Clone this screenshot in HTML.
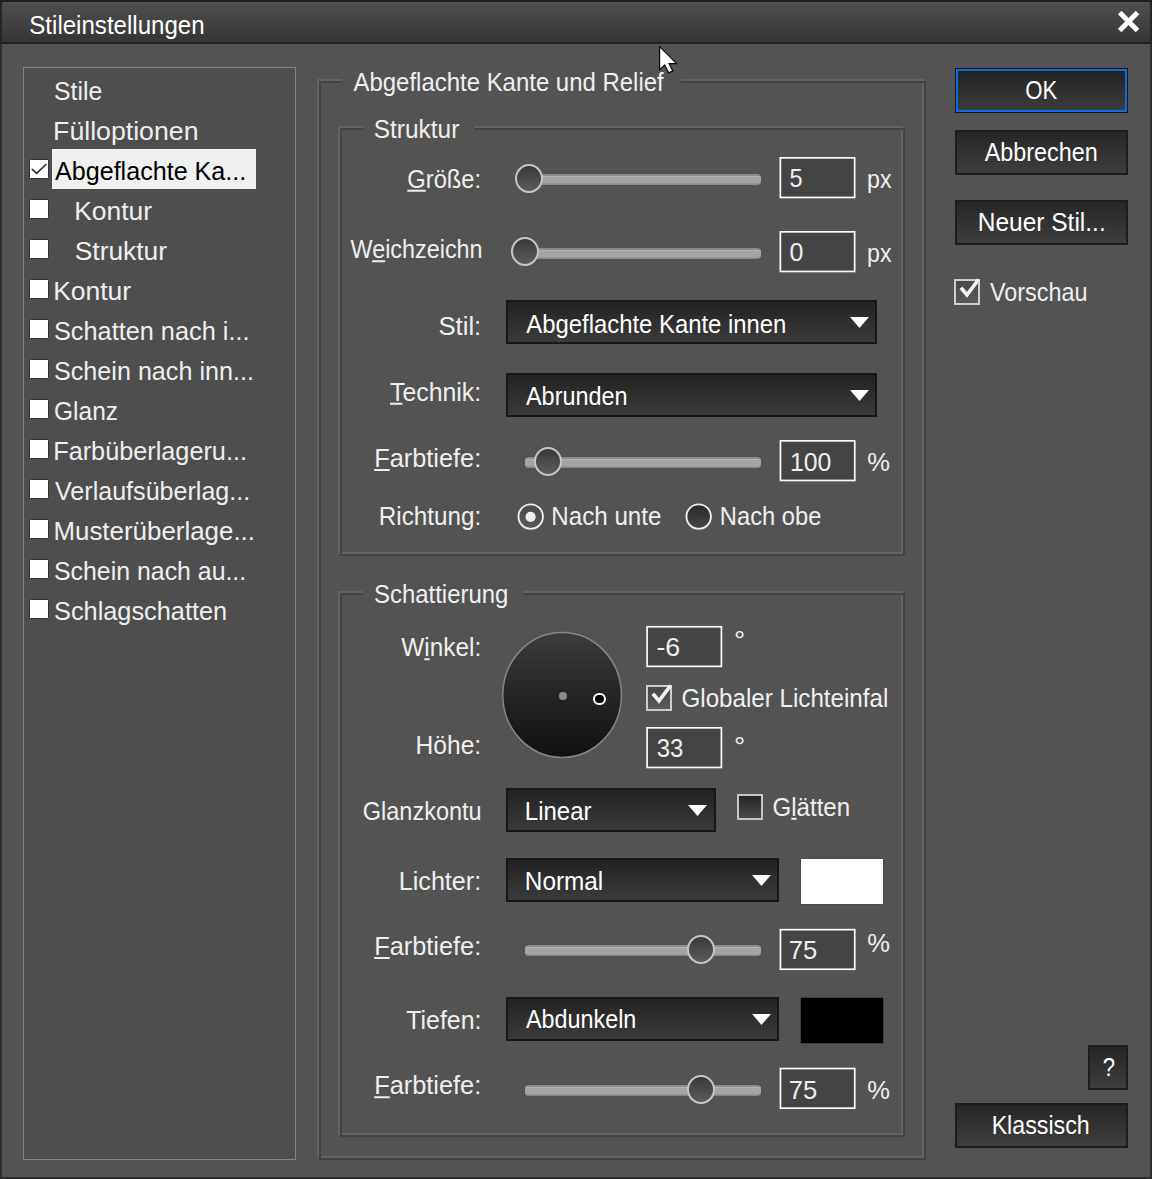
<!DOCTYPE html>
<html lang="de"><head><meta charset="utf-8"><title>Stileinstellungen</title>
<style>
html,body{margin:0;padding:0}
body{width:1152px;height:1179px;position:relative;overflow:hidden;background:#535353;font-family:"Liberation Sans", sans-serif;font-size:25.0px}
.a{position:absolute;box-sizing:border-box}
.t{position:absolute;left:0;top:0;white-space:nowrap;line-height:1;transform-origin:0 0;font-size:25.0px}
.t u{text-decoration-thickness:1.6px;text-underline-offset:2px}
.btn{border:2px solid #1d1d1d;background:linear-gradient(#262626,#3e3e3e)}
.dd{border:2px solid #171717;background:linear-gradient(#222222,#3b3b3b)}
.inp{border:2px solid #ececec;background:#444444}
.cb{width:20px;height:20px;left:29px;border:1px solid #303030;background:#fff;border-radius:1.5px}
.gl{border:2px solid #636363}
.gd{border:2px solid #434343}
.gap{background:#535353}
.trk{height:11px;border-radius:4px;background:linear-gradient(#8c8c8c 0,#8c8c8c 1.5px,#b4b4b4 2px,#b0b0b0 3px,#a4a4a4 3.5px,#a4a4a4 8.5px,#8e8e8e 10px,#858585 11px)}
.th{width:28px;height:29px;border-radius:50%;border:2px solid #c6c6c6;background:linear-gradient(#393939,#5c5c5c)}
.rad{width:26px;height:26px;border-radius:50%;border:2px solid #dcdcdc;background:linear-gradient(#353535,#5a5a5a)}
.cbx{width:26px;height:26px;border:2px solid #c6c6c6;background:linear-gradient(#252525,#4a4a4a)}
.cbx.on{border-color:#cdcdcd;background:linear-gradient(#474747,#595959)}
</style></head>
<body>
<div class="a " style="left:0px;top:0px;width:1152px;height:1179px;background:#2e2e2e"></div>
<div class="a " style="left:0px;top:0px;width:1152px;height:44px;background:#252525"></div>
<div class="a " style="left:0px;top:0px;width:1152px;height:2px;background:#1f1f1f"></div>
<div class="a " style="left:2px;top:44px;width:1148px;height:1133px;background:#535353"></div>
<div class="a " style="left:2px;top:2px;width:1148px;height:40px;background:linear-gradient(#4f4f4f,#353535)"></div>
<div class="a " style="left:2px;top:42px;width:1148px;height:2px;background:#212121"></div>
<svg class="a" style="left:1110px;top:4px" width="36" height="36" viewBox="1110 4 36 36"><path d="M1119.7 12.6 L1137.5 30.6 M1137.5 12.6 L1119.7 30.6" stroke="#fff" stroke-width="5" fill="none"/></svg>
<div class="a " style="left:23px;top:67px;width:273px;height:1093px;border:1px solid #7e8691;background:#4e4e4e"></div>
<div class="a " style="left:52px;top:149px;width:204px;height:40px;background:#f0f0f0"></div>
<div class="a cb" style="top:159px"></div>
<div class="a cb" style="top:199px"></div>
<div class="a cb" style="top:239px"></div>
<div class="a cb" style="top:279px"></div>
<div class="a cb" style="top:319px"></div>
<div class="a cb" style="top:359px"></div>
<div class="a cb" style="top:399px"></div>
<div class="a cb" style="top:439px"></div>
<div class="a cb" style="top:479px"></div>
<div class="a cb" style="top:519px"></div>
<div class="a cb" style="top:559px"></div>
<div class="a cb" style="top:599px"></div>
<svg class="a" style="left:29px;top:159px" width="20" height="20" viewBox="29 159 20 20"><path d="M32.3 169.4 L36.7 173.4 L45.8 164.5" stroke="#333" stroke-width="1.7" fill="none" stroke-linecap="round" stroke-linejoin="round"/></svg>
<div class="a gl" style="left:317px;top:79px;width:607px;height:1079px;"></div><div class="a gd" style="left:319px;top:81px;width:607px;height:1079px;"></div><div class="a gap" style="left:342px;top:79px;width:338.5px;height:4px;"></div>
<div class="a gl" style="left:338px;top:126px;width:565px;height:428px;"></div><div class="a gd" style="left:340px;top:128px;width:565px;height:428px;"></div><div class="a gap" style="left:363px;top:126px;width:111px;height:4px;"></div>
<div class="a gl" style="left:338px;top:591px;width:565px;height:544px;"></div><div class="a gd" style="left:340px;top:593px;width:565px;height:544px;"></div><div class="a gap" style="left:363px;top:591px;width:160px;height:4px;"></div>
<div class="a trk" style="left:525px;top:174px;width:236px;height:11px;"></div>
<div class="a th" style="left:515px;top:164px;width:28px;height:29px;"></div>
<div class="a trk" style="left:525px;top:248px;width:236px;height:11px;"></div>
<div class="a th" style="left:511px;top:237px;width:28px;height:29px;"></div>
<div class="a trk" style="left:525px;top:457px;width:236px;height:11px;"></div>
<div class="a th" style="left:534px;top:447px;width:28px;height:29px;"></div>
<div class="a trk" style="left:525px;top:945px;width:236px;height:11px;"></div>
<div class="a th" style="left:687px;top:935px;width:28px;height:29px;"></div>
<div class="a trk" style="left:525px;top:1085px;width:236px;height:11px;"></div>
<div class="a th" style="left:687px;top:1075px;width:28px;height:29px;"></div>
<svg class="a" style="left:0;top:0" width="1152" height="1179" viewBox="0 0 1152 1179"><g fill="#444444" stroke="#fbfbfb" stroke-width="1.7"><rect x="780.35" y="157.85" width="74.3" height="39.6"/><rect x="780.35" y="231.85" width="74.3" height="39.6"/><rect x="780.45" y="440.85" width="74.3" height="39.6"/><rect x="647.10" y="626.75" width="74.3" height="39.6"/><rect x="647.10" y="727.85" width="74.3" height="39.6"/><rect x="780.45" y="929.65" width="74.3" height="39.6"/><rect x="780.45" y="1068.55" width="74.3" height="39.6"/></g></svg>
<div class="a dd" style="left:506px;top:300px;width:371px;height:44px;"></div>
<svg class="a" style="left:849.5px;top:316.7px" width="19" height="11" viewBox="0 0 19 11"><path d="M0 0 H19 L9.5 10.9 Z" fill="#fff"/></svg>
<div class="a dd" style="left:506px;top:373px;width:371px;height:44px;"></div>
<svg class="a" style="left:849.5px;top:389.7px" width="19" height="11" viewBox="0 0 19 11"><path d="M0 0 H19 L9.5 10.9 Z" fill="#fff"/></svg>
<div class="a dd" style="left:506px;top:788px;width:209.5px;height:44px;"></div>
<svg class="a" style="left:688.0px;top:804.7px" width="19" height="11" viewBox="0 0 19 11"><path d="M0 0 H19 L9.5 10.9 Z" fill="#fff"/></svg>
<div class="a dd" style="left:506px;top:858px;width:273px;height:44px;"></div>
<svg class="a" style="left:751.5px;top:874.7px" width="19" height="11" viewBox="0 0 19 11"><path d="M0 0 H19 L9.5 10.9 Z" fill="#fff"/></svg>
<div class="a dd" style="left:506px;top:997px;width:273px;height:44px;"></div>
<svg class="a" style="left:751.5px;top:1013.7px" width="19" height="11" viewBox="0 0 19 11"><path d="M0 0 H19 L9.5 10.9 Z" fill="#fff"/></svg>
<div class="a " style="left:800px;top:858px;width:84px;height:47px;background:#fff;border:1px solid #4c4c4c"></div>
<div class="a " style="left:800px;top:997px;width:84px;height:47px;background:#000;border:1px solid #3f3f3f"></div>
<svg class="a" style="left:510px;top:496px" width="210" height="42" viewBox="510 496 210 42"><defs><linearGradient id="rs" x1="0" y1="0" x2="0" y2="1"><stop offset="0" stop-color="#4a4a4a"/><stop offset="1" stop-color="#585858"/></linearGradient><linearGradient id="ru" x1="0" y1="0" x2="0" y2="1"><stop offset="0" stop-color="#282828"/><stop offset="1" stop-color="#484848"/></linearGradient></defs><circle cx="530.7" cy="516.6" r="12.25" fill="url(#rs)" stroke="#ececec" stroke-width="1.9"/><circle cx="530.6" cy="516.9" r="5.1" fill="#efefef"/><circle cx="698.7" cy="516.6" r="12.25" fill="url(#ru)" stroke="#ececec" stroke-width="1.9"/></svg>
<svg class="a" style="left:498px;top:628px" width="128" height="134" viewBox="498 628 128 134"><defs><linearGradient id="dg" x1="0" y1="0" x2="0" y2="1"><stop offset="0" stop-color="#3c3c3c"/><stop offset="0.5" stop-color="#252525"/><stop offset="1" stop-color="#101010"/></linearGradient></defs><ellipse cx="562.1" cy="695" rx="59.3" ry="62.4" fill="url(#dg)" stroke="#868686" stroke-width="1.5"/></svg>
<div class="a " style="left:558.5px;top:691.6px;width:8px;height:8px;border-radius:50%;background:#8c8c8c"></div>
<div class="a " style="left:593.4px;top:692.5px;width:12.5px;height:12.5px;border-radius:50%;background:#000;border:2px solid #fff"></div>
<span class="t" style="font-size:28px;transform:translate(734px,626.75px);color:#efefef">°</span>
<span class="t" style="font-size:28px;transform:translate(734px,732.50px);color:#efefef">°</span>
<div class="a cbx on" style="left:954px;top:279px;width:26px;height:26px;"></div>
<svg class="a" style="left:951.8px;top:274.9px" width="32" height="32" viewBox="-2 -4 32 32"><path d="M6.9 8.7 L13 15.9 L24.6 0.5" stroke="#f0f0f0" stroke-width="3.7" fill="none" stroke-linejoin="miter"/></svg>
<div class="a cbx on" style="left:646px;top:685px;width:26px;height:26px;"></div>
<svg class="a" style="left:643.9px;top:680.9px" width="32" height="32" viewBox="-2 -4 32 32"><path d="M6.9 8.7 L13 15.9 L24.6 0.5" stroke="#f0f0f0" stroke-width="3.7" fill="none" stroke-linejoin="miter"/></svg>
<div class="a cbx" style="left:737px;top:794px;width:26px;height:26px;"></div>
<div class="a " style="left:955px;top:68px;width:173px;height:45px;border:1px solid #171717;background:#0f6be2"></div>
<div class="a " style="left:958px;top:71px;width:167px;height:39px;background:linear-gradient(#232323,#3c3c3c)"></div>
<div class="a btn" style="left:955px;top:130px;width:173px;height:45px;"></div>
<div class="a btn" style="left:955px;top:200px;width:173px;height:45px;"></div>
<div class="a btn" style="left:1088px;top:1045px;width:40px;height:45px;"></div>
<div class="a btn" style="left:955px;top:1103px;width:173px;height:45px;"></div>
<svg class="a" style="left:655px;top:42px" width="28" height="36" viewBox="655 42 28 36"><path d="M659.6 46.6 L659.6 69.6 L664.7 64.9 L668.8 72.9 L672.9 70.9 L669 63.6 L676.6 63.6 Z" fill="#fff" stroke="#0a0a0a" stroke-width="1.2" stroke-linejoin="miter"/></svg>
<span class="t" style="transform:translate(29.29px,12.75px) scaleX(0.9630);color:#ffffff">Stileinstellungen</span>
<span class="t" style="transform:translate(54.01px,78.50px) scaleX(0.9897);color:#efefef">Stile</span>
<span class="t" style="transform:translate(53.12px,118.50px) scaleX(1.0671);color:#efefef">Fülloptionen</span>
<span class="t" style="transform:translate(55.00px,158.50px) scaleX(1.0042);color:#000000">Abgeflachte Ka...</span>
<span class="t" style="transform:translate(74.13px,198.50px) scaleX(1.0584);color:#efefef">Kontur</span>
<span class="t" style="transform:translate(74.69px,238.50px) scaleX(1.0557);color:#efefef">Struktur</span>
<span class="t" style="transform:translate(53.13px,278.50px) scaleX(1.0584);color:#efefef">Kontur</span>
<span class="t" style="transform:translate(53.99px,318.50px) scaleX(1.0119);color:#efefef">Schatten nach i...</span>
<span class="t" style="transform:translate(53.99px,358.50px) scaleX(1.0061);color:#efefef">Schein nach inn...</span>
<span class="t" style="transform:translate(54.02px,398.50px) scaleX(0.9795);color:#efefef">Glanz</span>
<span class="t" style="transform:translate(53.23px,438.50px) scaleX(1.0102);color:#efefef">Farbüberlageru...</span>
<span class="t" style="transform:translate(55.00px,478.50px) scaleX(1.0033);color:#efefef">Verlaufsüberlag...</span>
<span class="t" style="transform:translate(53.43px,518.50px) scaleX(1.0362);color:#efefef">Musterüberlage...</span>
<span class="t" style="transform:translate(54.01px,558.50px) scaleX(0.9948);color:#efefef">Schein nach au...</span>
<span class="t" style="transform:translate(53.99px,598.50px) scaleX(1.0131);color:#efefef">Schlagschatten</span>
<span class="t" style="transform:translate(353.50px,69.50px) scaleX(0.9579);color:#efefef">Abgeflachte Kante und Relief</span>
<span class="t" style="transform:translate(373.77px,116.50px) scaleX(0.9774);color:#efefef">Struktur</span>
<span class="t" style="transform:translate(374.04px,582.00px) scaleX(0.9569);color:#efefef">Schattierung</span>
<span class="t" style="transform:translate(407.30px,166.75px) scaleX(0.9486);color:#efefef"><u>G</u>röße:</span>
<span class="t" style="transform:translate(350.50px,237.25px) scaleX(0.9350);color:#efefef">W<u>e</u>ichzeichn</span>
<span class="t" style="transform:translate(438.47px,314.00px) scaleX(1.0264);color:#efefef">Stil:</span>
<span class="t" style="transform:translate(390.00px,379.75px) scaleX(0.9943);color:#efefef"><u>T</u>echnik:</span>
<span class="t" style="transform:translate(374.22px,446.00px) scaleX(1.0132);color:#efefef"><u>F</u>arbtiefe:</span>
<span class="t" style="transform:translate(378.81px,504.00px) scaleX(0.9688);color:#efefef">Richtung:</span>
<span class="t" style="transform:translate(401.25px,635.25px) scaleX(0.9749);color:#efefef">W<u>i</u>nkel:</span>
<span class="t" style="transform:translate(415.53px,732.75px) scaleX(0.9838);color:#efefef">Höhe:</span>
<span class="t" style="transform:translate(362.81px,798.50px) scaleX(0.9393);color:#efefef">Glanzkontu</span>
<span class="t" style="transform:translate(398.74px,868.50px) scaleX(1.0059);color:#efefef">Lichter:</span>
<span class="t" style="transform:translate(374.22px,934.00px) scaleX(1.0132);color:#efefef"><u>F</u>arbtiefe:</span>
<span class="t" style="transform:translate(406.25px,1007.75px) scaleX(0.9959);color:#efefef">Tiefen:</span>
<span class="t" style="transform:translate(374.22px,1073.25px) scaleX(1.0132);color:#efefef"><u>F</u>arbtiefe:</span>
<span class="t" style="transform:translate(789.56px,166.25px) scaleX(0.9375);color:#efefef">5</span>
<span class="t" style="transform:translate(867.07px,166.75px) scaleX(0.9265);color:#efefef">px</span>
<span class="t" style="transform:translate(789.50px,240.00px) scaleX(1.0000);color:#efefef">0</span>
<span class="t" style="transform:translate(867.07px,240.50px) scaleX(0.9265);color:#efefef">px</span>
<span class="t" style="transform:translate(790.01px,449.50px) scaleX(0.9923);color:#efefef">100</span>
<span class="t" style="transform:translate(867.25px,449.50px) scaleX(1.0227);color:#efefef">%</span>
<span class="t" style="transform:translate(551.32px,504.00px) scaleX(0.9657);color:#efefef">Nach unte</span>
<span class="t" style="transform:translate(719.85px,504.00px) scaleX(0.9485);color:#efefef">Nach obe</span>
<span class="t" style="transform:translate(656.43px,635.25px) scaleX(1.0701);color:#efefef">-6</span>
<span class="t" style="transform:translate(681.53px,685.75px) scaleX(0.9659);color:#efefef">Globaler Lichteinfal</span>
<span class="t" style="transform:translate(656.75px,735.75px) scaleX(0.9571);color:#efefef">33</span>
<span class="t" style="transform:translate(524.83px,798.50px) scaleX(0.9603);color:#ffffff">Linear</span>
<span class="t" style="transform:translate(772.54px,794.75px) scaleX(0.9625);color:#efefef">G<u>l</u>ätten</span>
<span class="t" style="transform:translate(524.80px,868.50px) scaleX(0.9739);color:#ffffff">Normal</span>
<span class="t" style="transform:translate(788.73px,938.25px) scaleX(1.0230);color:#efefef">75</span>
<span class="t" style="transform:translate(867.25px,930.75px) scaleX(1.0227);color:#efefef">%</span>
<span class="t" style="transform:translate(526.00px,1007.25px) scaleX(0.9339);color:#ffffff">Abdunkeln</span>
<span class="t" style="transform:translate(788.73px,1077.75px) scaleX(1.0230);color:#efefef">75</span>
<span class="t" style="transform:translate(867.25px,1077.75px) scaleX(1.0227);color:#efefef">%</span>
<span class="t" style="transform:translate(526.25px,311.50px) scaleX(0.9548);color:#ffffff">Abgeflachte Kante innen</span>
<span class="t" style="transform:translate(526.00px,383.50px) scaleX(0.9370);color:#ffffff">Abrunden</span>
<span class="t" style="transform:translate(1025.21px,77.70px) scaleX(0.8859);color:#ffffff">OK</span>
<span class="t" style="transform:translate(984.80px,140.10px) scaleX(0.9332);color:#ffffff">Abbrechen</span>
<span class="t" style="transform:translate(977.74px,209.90px) scaleX(0.9798);color:#ffffff">Neuer Stil...</span>
<span class="t" style="transform:translate(990.00px,280.00px) scaleX(0.9358);color:#efefef">Vorschau</span>
<span class="t" style="transform:translate(1102.82px,1054.90px) scaleX(0.8833);color:#ffffff">?</span>
<span class="t" style="transform:translate(991.64px,1112.90px) scaleX(0.9281);color:#ffffff">Klassisch</span>
</body></html>
